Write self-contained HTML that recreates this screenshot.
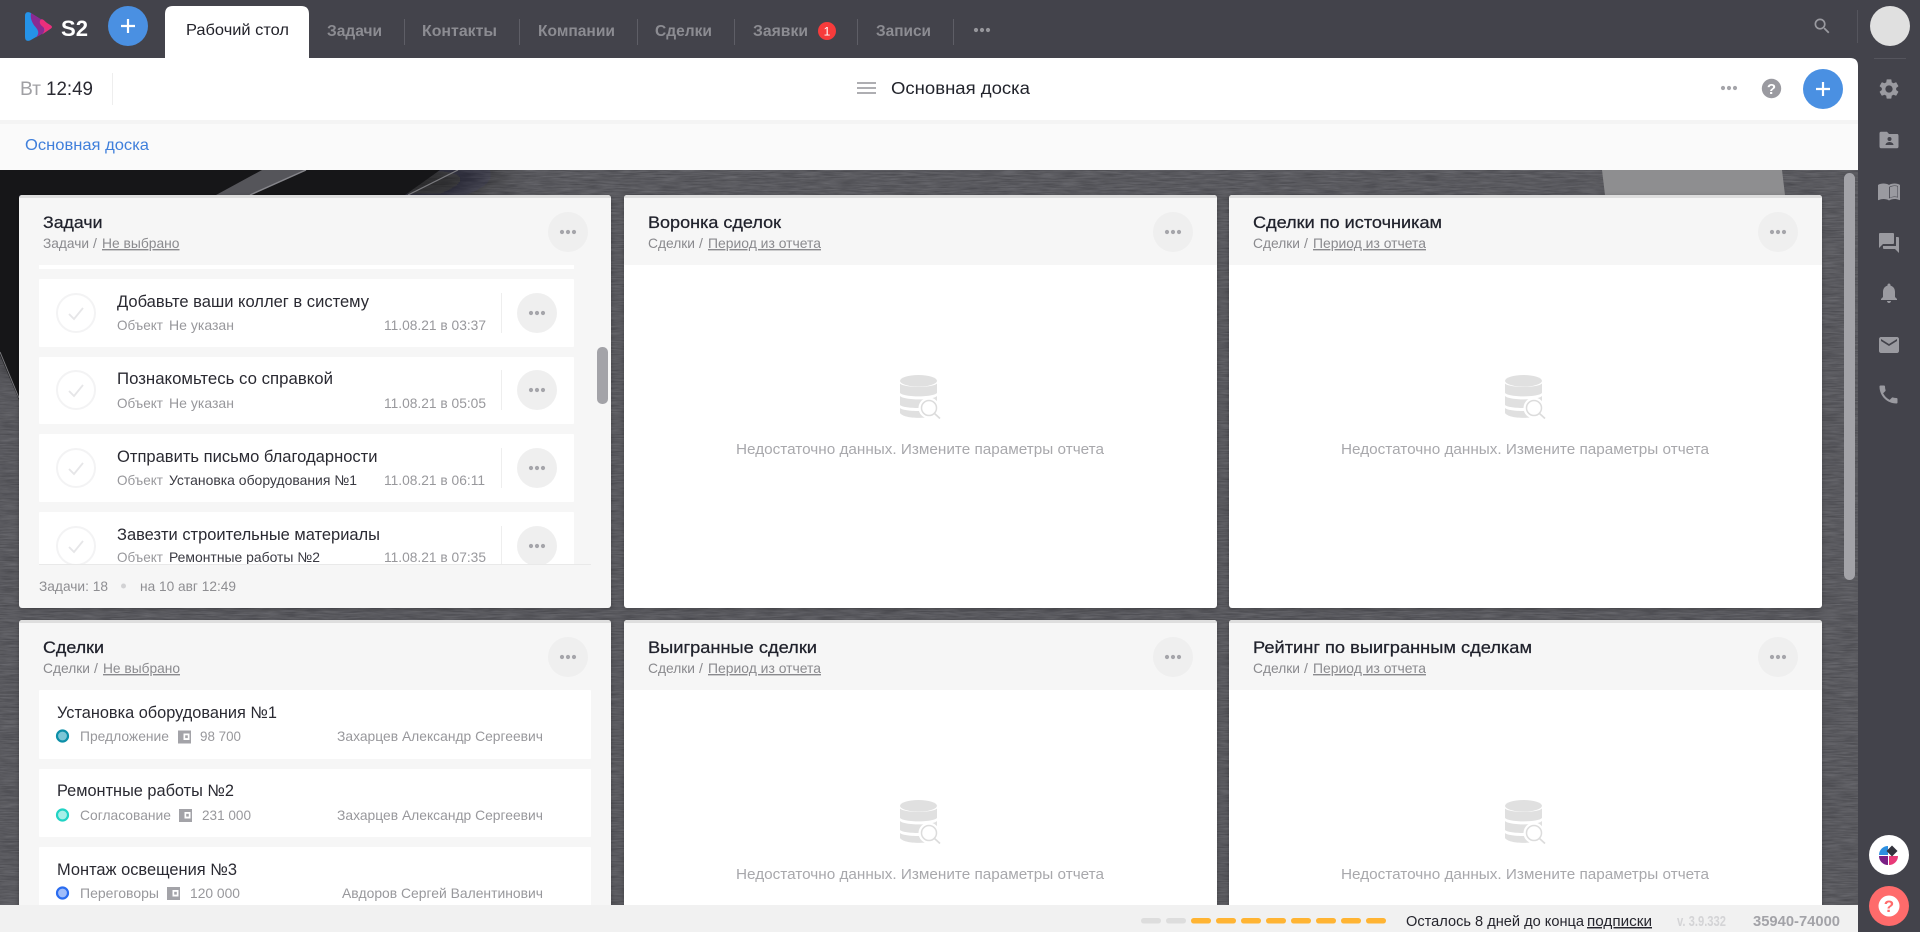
<!DOCTYPE html>
<html lang="ru">
<head>
<meta charset="utf-8">
<title>Рабочий стол</title>
<style>
html,body{margin:0;padding:0;width:1920px;height:932px;overflow:hidden;background:#43434b}
svg{display:block}
text{font-family:"Liberation Sans","Noto Sans CJK SC",sans-serif;white-space:pre}
.nav{font-size:15.5px;font-weight:700;fill:#8c8c92}
.tt{font-size:17px;fill:#20222c;stroke:#20222c;stroke-width:.25}
.sub{font-size:14px;fill:#8a8a8e}
.u{text-decoration:underline}
.it{font-size:16.5px;fill:#2a2a32}
.m{font-size:14px;fill:#98989c}
.d{font-size:14px;fill:#3a3a42}
.e{font-size:15px;fill:#a8a8ac}
</style>
</head>
<body>
<svg xmlns="http://www.w3.org/2000/svg" width="1920" height="932" viewBox="0 0 1920 932">
<defs>
<filter id="tex" x="0" y="0" width="100%" height="100%" color-interpolation-filters="sRGB">
<feTurbulence type="fractalNoise" baseFrequency="0.05 0.7" numOctaves="3" seed="4"/>
<feColorMatrix type="matrix" values="0.17 0 0 0 0.265  0.17 0 0 0 0.265  0.17 0 0 0 0.285  0 0 0 0 1"/>
</filter>
<filter id="sh" x="-5%" y="-5%" width="110%" height="110%"><feDropShadow dx="0" dy="1" stdDeviation="2" flood-color="#000" flood-opacity=".25"/></filter>
<filter id="bl"><feGaussianBlur stdDeviation="14"/></filter>
<clipPath id="main"><rect x="0" y="170" width="1858" height="735"/></clipPath>
<clipPath id="list"><rect x="39" y="265" width="552" height="299"/></clipPath>
<symbol id="dots" viewBox="0 0 40 40" overflow="visible">
<circle cx="14" cy="20" r="2.1" fill="#a5a5aa"/><circle cx="20" cy="20" r="2.1" fill="#a5a5aa"/><circle cx="26" cy="20" r="2.1" fill="#a5a5aa"/>
</symbol>
<symbol id="more" viewBox="0 0 40 40">
<circle cx="20" cy="20" r="20" fill="#efefef"/>
<circle cx="14" cy="20" r="2.1" fill="#a5a5aa"/><circle cx="20" cy="20" r="2.1" fill="#a5a5aa"/><circle cx="26" cy="20" r="2.1" fill="#a5a5aa"/>
</symbol>
<symbol id="chk" viewBox="0 0 40 40">
<circle cx="20" cy="20" r="19" fill="#fff" stroke="#f3f3f4" stroke-width="2"/>
<path d="M13 21l5 5 9-11" fill="none" stroke="#e6e6e8" stroke-width="1.8"/>
</symbol>
<symbol id="db" viewBox="0 0 41 44">
<ellipse cx="18.5" cy="5.8" rx="18.5" ry="5.8" fill="#e0e0e0"/>
<path d="M0 8.5C4 13 33 13 37 8.5V18C33 22.5 4 22.5 0 18Z" fill="#e0e0e0"/>
<path d="M0 21C4 25.5 33 25.5 37 21V30C33 34 4 34 0 30Z" fill="#e0e0e0"/>
<path d="M0 33C4 37 33 37 37 33V38C33 44.500 4 44.500 0 38Z" fill="#e0e0e0"/>
<circle cx="29" cy="33" r="10.500" fill="#fff"/>
<circle cx="29" cy="33" r="7.500" fill="#fff" stroke="#dcdcdc" stroke-width="1.500"/>
<path d="M34.500 38.500L40 43.500" stroke="#dcdcdc" stroke-width="1.700"/>
</symbol>
<symbol id="wal" viewBox="0 0 13 13">
<rect width="13" height="13" fill="#a3a3a8"/>
<rect x="5.500" y="3" width="6" height="6.500" fill="#fff"/>
<rect x="7.200" y="4.800" width="2.600" height="2.800" fill="#a3a3a8"/>
</symbol>
</defs>

<!-- background -->
<g clip-path="url(#main)">
<rect x="0" y="170" width="1858" height="735" fill="#5a5a60" filter="url(#tex)"/>
<path d="M0 170H520L440 195H20V380L0 340Z" fill="#101012" filter="url(#bl)"/>
<path d="M0 170H440L405 195H19V400L0 355Z" fill="#161618"/>
<path d="M0 352L19 398" stroke="#77777b" stroke-width="1" fill="none"/>
<path d="M216 195L262 170H306L250 195Z" fill="#55555a"/>
<path d="M250 195L306 170" stroke="#85858a" stroke-width="1.500"/>
<path d="M408 195L458 170" stroke="#7c7c80" stroke-width="1.200"/>
<path d="M1602 170H1782L1785 195H1605Z" fill="#8e8e90"/>
</g>

<!-- top bar -->
<rect x="0" y="0" width="1920" height="58" fill="#43434b"/>
<g>
<path d="M25 16Q25 11 30 12.500L50 25Q53 27 50 29L30 40.500Q25 42 25 37Z" fill="#2593e8"/>
<path d="M31 13L43 20.500L44.500 32.500L36 37.500C40 33 38 30 35.500 27C32 23 30 18 31 13Z" fill="#8a2a92"/>
<path d="M41 19.500C43 18.500 45 21.500 47 23L51 25.500Q53 27 51 28.500L42 34.500C45 31 45.500 28.500 42 26C39.500 24 39 21 41 19.500Z" fill="#ea2f7c"/>
</g>
<text x="61" y="36" textLength="27" lengthAdjust="spacingAndGlyphs" style="font-size:22px;font-weight:700;fill:#fff">S2</text>
<circle cx="128" cy="26" r="20" fill="#4a90e2"/>
<path d="M121 26h14M128 19v14" stroke="#fff" stroke-width="2.200"/>
<path d="M165 58V14Q165 6 173 6H301Q309 6 309 14V58Z" fill="#fff"/>
<text x="186" y="35" textLength="103" lengthAdjust="spacingAndGlyphs" style="font-size:16px;fill:#22222a">Рабочий стол</text>
<text class="nav" x="327" y="36" textLength="55" lengthAdjust="spacingAndGlyphs">Задачи</text>
<text class="nav" x="422" y="36" textLength="75" lengthAdjust="spacingAndGlyphs">Контакты</text>
<text class="nav" x="538" y="36" textLength="77" lengthAdjust="spacingAndGlyphs">Компании</text>
<text class="nav" x="655" y="36" textLength="57" lengthAdjust="spacingAndGlyphs">Сделки</text>
<text class="nav" x="753" y="36" textLength="55" lengthAdjust="spacingAndGlyphs">Заявки</text>
<text class="nav" x="876" y="36" textLength="55" lengthAdjust="spacingAndGlyphs">Записи</text>
<path d="M404.500 19v26M519.500 19v26M637.500 19v26M734.500 19v26M857.500 19v26M953.500 19v26" stroke="#5e5e66" stroke-width="1"/>
<circle cx="827" cy="31" r="9" fill="#f73b3b"/>
<text x="827" y="35.500" text-anchor="middle" style="font-size:12px;fill:#fff">1</text>
<use href="#dots" x="962" y="10" width="40" height="40" opacity=".85"/>
<g transform="translate(1812,16) scale(.85)" fill="#9a9aa0"><path d="M15.500 14h-.79l-.28-.27C15.410 12.590 16 11.110 16 9.500 16 5.910 13.090 3 9.500 3S3 5.910 3 9.500 5.910 16 9.500 16c1.610 0 3.090-.59 4.230-1.570l.27.28v.79l5 4.990L20.490 19l-4.990-5zm-6 0C7.010 14 5 11.990 5 9.500S7.010 5 9.500 5 14 7.010 14 9.500 11.990 14 9.500 14z"/></g>
<path d="M1857.500 10v33" stroke="#55555d"/>
<circle cx="1890" cy="26" r="20" fill="#e0e0e0"/>

<!-- right sidebar -->
<rect x="1858" y="46" width="62" height="886" fill="#43434b"/>
<path d="M1874 58.500h32" stroke="#55555d"/>
<g fill="#9a9aa0">
<g transform="translate(1877,77)"><path d="M19.140 12.940c.04-.3.06-.61.06-.94 0-.32-.02-.64-.07-.94l2.030-1.580c.18-.14.23-.41.12-.61l-1.920-3.320c-.12-.22-.37-.29-.59-.22l-2.390.96c-.5-.38-1.030-.7-1.620-.94l-.36-2.540c-.04-.24-.24-.41-.48-.41h-3.840c-.24 0-.43.17-.47.41l-.36 2.540c-.59.24-1.130.57-1.620.94l-2.390-.96c-.22-.08-.47 0-.59.22L2.740 8.870c-.12.21-.08.47.12.61l2.030 1.580c-.05.3-.09.63-.09.94s.02.64.07.94l-2.030 1.580c-.18.14-.23.41-.12.61l1.920 3.320c.12.22.37.29.59.22l2.390-.96c.5.38 1.030.7 1.620.94l.36 2.540c.05.24.24.41.48.41h3.840c.24 0 .44-.17.47-.41l.36-2.540c.59-.24 1.130-.56 1.620-.94l2.390.96c.22.08.47 0 .59-.22l1.920-3.320c.12-.22.07-.47-.12-.61l-2.010-1.580zM12 15.600c-1.980 0-3.600-1.620-3.600-3.600s1.620-3.600 3.600-3.600 3.600 1.620 3.600 3.600-1.620 3.600-3.600 3.600z"/></g>
<g transform="translate(1877,128)"><path d="M20.500 6H12l-2-2.200H4C3 3.800 2.500 4.500 2.500 5.500v13c0 1 .6 1.700 1.500 1.700h16c1 0 1.500-.7 1.500-1.700V8c0-1-.4-2-1-2z"/><circle cx="12.500" cy="11" r="2" fill="#43434b"/><path d="M8.500 17c0-2 2.500-3 4-3s4 1 4 3z" fill="#43434b"/></g>
<g transform="translate(1877,179)"><path d="M21 5c-1.110-.35-2.330-.5-3.500-.5-1.950 0-4.050.4-5.500 1.500-1.450-1.100-3.550-1.500-5.500-1.500S2.450 4.900 1 6v14.650c0 .25.25.5.5.5.1 0 .15-.05.25-.05C3.100 20.450 5.050 20 6.500 20c1.950 0 4.050.4 5.500 1.500 1.350-.85 3.800-1.500 5.500-1.500 1.650 0 3.350.3 4.750 1.050.1.05.15.05.25.05.25 0 .5-.25.5-.5V6c-.6-.45-1.250-.75-2-1zm0 13.500c-1.100-.35-2.300-.5-3.500-.5-1.700 0-4.150.65-5.500 1.500V8c1.350-.85 3.800-1.500 5.500-1.500 1.200 0 2.400.15 3.500.5v11.500z"/><path d="M12.800 8.300c1.300-.8 3.300-1.300 4.700-1.300 1 0 2 .1 3 .4v10.500c-1-.3-2-.4-3-.4-1.500 0-3.400.5-4.700 1.200zM11.200 8.300C9.900 7.500 8 7 6.500 7c-1 0-2 .1-3 .4v10.500c1-.3 2-.4 3-.4 1.500 0 3.400.5 4.700 1.200z"/></g>
<g transform="translate(1877,231)"><path d="M21 6h-2v9H6v2c0 .55.45 1 1 1h11l4 4V7c0-.55-.45-1-1-1zm-4 6V3c0-.55-.45-1-1-1H3c-.55 0-1 .45-1 1v14l4-4h10c.55 0 1-.45 1-1z"/></g>
<g transform="translate(1877,281)"><path d="M12 22c1.100 0 2-.9 2-2h-4c0 1.100.89 2 2 2zm6-6v-5c0-3.070-1.640-5.640-4.500-6.320V4c0-.83-.67-1.500-1.500-1.500s-1.500.67-1.500 1.500v.68C7.630 5.360 6 7.920 6 11v5l-2 2v1h16v-1l-2-2z"/></g>
<g transform="translate(1877,333)"><path d="M20 4H4c-1.100 0-1.990.9-1.990 2L2 18c0 1.100.9 2 2 2h16c1.100 0 2-.9 2-2V6c0-1.100-.9-2-2-2zm0 4l-8 5-8-5V6l8 5 8-5v2z"/></g>
<g transform="translate(1877,383)"><path d="M6.620 10.790c1.440 2.830 3.760 5.140 6.590 6.590l2.200-2.200c.27-.27.67-.36 1.020-.24 1.120.37 2.330.57 3.570.57.55 0 1 .45 1 1V20c0 .55-.45 1-1 1-9.390 0-17-7.610-17-17 0-.55.45-1 1-1h3.500c.55 0 1 .45 1 1 0 1.250.2 2.450.57 3.570.11.35.03.74-.25 1.020l-2.200 2.200z" transform="translate(-.5,-.5)"/></g>
</g>
<circle cx="1889" cy="855" r="20" fill="#fff"/>
<path d="M1888 855v-9a9 9 0 0 0-9 9z" fill="#2d8fe0"/>
<path d="M1888 856v9a9 9 0 0 1-9-9z" fill="#7a1f85"/>
<path d="M1889 856v9a9 9 0 0 0 9-9z" fill="#e83a78"/>
<path d="M1892 845.500l5.500 5.500-5.500 5.500-5.500-5.500z" fill="#33333d"/>
<circle cx="1889" cy="906" r="20" fill="#ff6b6b"/>
<circle cx="1889" cy="906" r="10.500" fill="#fff"/>
<text x="1889" y="912" text-anchor="middle" style="font-size:17px;font-weight:700;fill:#ff6b6b">?</text>

<!-- board header -->
<path d="M0 58H1850Q1858 58 1858 66V120H0Z" fill="#fff"/>
<rect x="0" y="120" width="1858" height="50" fill="#fafafa"/>
<rect x="0" y="120" width="1858" height="4" fill="#f4f4f4"/>
<text x="20" y="95" textLength="21" lengthAdjust="spacingAndGlyphs" style="font-size:19px;fill:#a0a0a4">Вт</text>
<text x="46" y="95" textLength="47" lengthAdjust="spacingAndGlyphs" style="font-size:19px;fill:#2a2a32">12:49</text>
<path d="M112.500 73v32" stroke="#eeeeee"/>
<path d="M857 83h19M857 88h19M857 93h19" stroke="#a3a3a8" stroke-width="1.800"/>
<text x="891" y="94" textLength="139" lengthAdjust="spacingAndGlyphs" style="font-size:17.500px;fill:#22242c">Основная доска</text>
<use href="#dots" x="1709" y="68" width="40" height="40"/>
<circle cx="1771.500" cy="88.500" r="9.700" fill="#9a9aa0"/>
<text x="1771.500" y="94" text-anchor="middle" style="font-size:15px;font-weight:700;fill:#fff">?</text>
<circle cx="1823" cy="89" r="20" fill="#4a90e2"/>
<path d="M1816 89h14M1823 82v14" stroke="#fff" stroke-width="2.200"/>
<text x="25" y="150" textLength="124" lengthAdjust="spacingAndGlyphs" style="font-size:16px;fill:#3f7fdb">Основная доска</text>

<!-- scrollbar -->
<rect x="1844" y="173" width="11" height="407" rx="5.500" fill="#a3a3a8"/>

<g clip-path="url(#main)">
<!-- card: tasks -->
<g filter="url(#sh)"><rect x="19" y="195" width="592" height="413" rx="3" fill="#f6f6f6"/></g>
<path d="M19 198a3 3 0 0 1 3-3H608a3 3 0 0 1 3 3z" fill="#dedede"/>
<text class="tt" x="43" y="228" textLength="59.500" lengthAdjust="spacingAndGlyphs">Задачи</text>
<text class="sub" x="43" y="248" textLength="46" lengthAdjust="spacingAndGlyphs">Задачи</text>
<text class="sub" x="93" y="248">/</text>
<text class="sub u" x="102" y="248" textLength="77.500" lengthAdjust="spacingAndGlyphs">Не выбрано</text>
<use href="#more" x="548" y="212" width="40" height="40"/>
<g clip-path="url(#list)">
<rect x="39" y="255" width="535" height="14" fill="#fff"/>
<rect x="39" y="279" width="535" height="68" rx="1" fill="#fff"/>
<rect x="39" y="357" width="535" height="67" rx="1" fill="#fff"/>
<rect x="39" y="434" width="535" height="68" rx="1" fill="#fff"/>
<rect x="39" y="512" width="535" height="68" rx="1" fill="#fff"/>
<use href="#chk" x="56" y="293" width="40" height="40"/>
<use href="#chk" x="56" y="370" width="40" height="40"/>
<use href="#chk" x="56" y="448" width="40" height="40"/>
<use href="#chk" x="56" y="526" width="40" height="40"/>
<text class="it" x="117" y="307" textLength="252" lengthAdjust="spacingAndGlyphs">Добавьте ваши коллег в систему</text>
<text class="m" x="117" y="330" textLength="46" lengthAdjust="spacingAndGlyphs">Объект</text>
<text class="m" x="169" y="330" textLength="65" lengthAdjust="spacingAndGlyphs">Не указан</text>
<text class="m" x="384" y="330" textLength="102" lengthAdjust="spacingAndGlyphs">11.08.21 в 03:37</text>
<text class="it" x="117" y="384" textLength="216" lengthAdjust="spacingAndGlyphs">Познакомьтесь со справкой</text>
<text class="m" x="117" y="408" textLength="46" lengthAdjust="spacingAndGlyphs">Объект</text>
<text class="m" x="169" y="408" textLength="65" lengthAdjust="spacingAndGlyphs">Не указан</text>
<text class="m" x="384" y="408" textLength="102" lengthAdjust="spacingAndGlyphs">11.08.21 в 05:05</text>
<text class="it" x="117" y="462" textLength="260.500" lengthAdjust="spacingAndGlyphs">Отправить письмо благодарности</text>
<text class="m" x="117" y="485" textLength="46" lengthAdjust="spacingAndGlyphs">Объект</text>
<text class="d" x="169" y="485" textLength="188" lengthAdjust="spacingAndGlyphs">Установка оборудования №1</text>
<text class="m" x="384" y="485" textLength="101" lengthAdjust="spacingAndGlyphs">11.08.21 в 06:11</text>
<text class="it" x="117" y="540" textLength="263" lengthAdjust="spacingAndGlyphs">Завезти строительные материалы</text>
<text class="m" x="117" y="562" textLength="46" lengthAdjust="spacingAndGlyphs">Объект</text>
<text class="d" x="169" y="562" textLength="151" lengthAdjust="spacingAndGlyphs">Ремонтные работы №2</text>
<text class="m" x="384" y="562" textLength="102" lengthAdjust="spacingAndGlyphs">11.08.21 в 07:35</text>
<path d="M501.500 293v40M501.500 370v40M501.500 448v40M501.500 526v40" stroke="#eeeeee"/>
<use href="#more" x="517" y="293" width="40" height="40"/>
<use href="#more" x="517" y="370" width="40" height="40"/>
<use href="#more" x="517" y="448" width="40" height="40"/>
<use href="#more" x="517" y="526" width="40" height="40"/>
</g>
<path d="M39 564.500H591" stroke="#e9e9e9"/>
<rect x="597" y="347" width="11" height="57" rx="5" fill="#a3a3a8"/>
<text class="m" x="39" y="591" textLength="69" lengthAdjust="spacingAndGlyphs" style="fill:#8e8e92">Задачи: 18</text>
<circle cx="123.500" cy="586" r="2.500" fill="#d2d2d4"/>
<text class="m" x="140" y="591" textLength="96" lengthAdjust="spacingAndGlyphs" style="fill:#8e8e92">на 10 авг 12:49</text>

<!-- card: funnel -->
<g filter="url(#sh)"><rect x="624" y="195" width="593" height="413" rx="3" fill="#fff"/></g>
<path d="M624 265V198a3 3 0 0 1 3-3H1214a3 3 0 0 1 3 3V265Z" fill="#f6f6f6"/>
<path d="M624 198a3 3 0 0 1 3-3H1214a3 3 0 0 1 3 3z" fill="#dedede"/>
<text class="tt" x="648" y="228" textLength="133" lengthAdjust="spacingAndGlyphs">Воронка сделок</text>
<text class="sub" x="648" y="248" textLength="47" lengthAdjust="spacingAndGlyphs">Сделки</text>
<text class="sub" x="699" y="248">/</text>
<text class="sub u" x="708" y="248" textLength="113" lengthAdjust="spacingAndGlyphs">Период из отчета</text>
<use href="#more" x="1153" y="212" width="40" height="40"/>
<use href="#db" x="900" y="375" width="41" height="44"/>
<text class="e" x="736" y="454" textLength="368" lengthAdjust="spacingAndGlyphs">Недостаточно данных. Измените параметры отчета</text>

<!-- card: sources -->
<g filter="url(#sh)"><rect x="1229" y="195" width="593" height="413" rx="3" fill="#fff"/></g>
<path d="M1229 265V198a3 3 0 0 1 3-3H1819a3 3 0 0 1 3 3V265Z" fill="#f6f6f6"/>
<path d="M1229 198a3 3 0 0 1 3-3H1819a3 3 0 0 1 3 3z" fill="#dedede"/>
<text class="tt" x="1253" y="228" textLength="189" lengthAdjust="spacingAndGlyphs">Сделки по источникам</text>
<text class="sub" x="1253" y="248" textLength="47" lengthAdjust="spacingAndGlyphs">Сделки</text>
<text class="sub" x="1304" y="248">/</text>
<text class="sub u" x="1313" y="248" textLength="113" lengthAdjust="spacingAndGlyphs">Период из отчета</text>
<use href="#more" x="1758" y="212" width="40" height="40"/>
<use href="#db" x="1505" y="375" width="41" height="44"/>
<text class="e" x="1341" y="454" textLength="368" lengthAdjust="spacingAndGlyphs">Недостаточно данных. Измените параметры отчета</text>

<!-- card: deals -->
<g filter="url(#sh)"><rect x="19" y="620" width="592" height="320" rx="3" fill="#f6f6f6"/></g>
<path d="M19 623a3 3 0 0 1 3-3H608a3 3 0 0 1 3 3z" fill="#dedede"/>
<text class="tt" x="43" y="653" textLength="61" lengthAdjust="spacingAndGlyphs">Сделки</text>
<text class="sub" x="43" y="673" textLength="47" lengthAdjust="spacingAndGlyphs">Сделки</text>
<text class="sub" x="94" y="673">/</text>
<text class="sub u" x="103" y="673" textLength="77" lengthAdjust="spacingAndGlyphs">Не выбрано</text>
<use href="#more" x="548" y="637" width="40" height="40"/>
<rect x="39" y="690" width="552" height="69" rx="1" fill="#fff"/>
<rect x="39" y="769" width="552" height="68" rx="1" fill="#fff"/>
<rect x="39" y="847" width="552" height="70" rx="1" fill="#fff"/>
<text class="it" x="57" y="718" textLength="220" lengthAdjust="spacingAndGlyphs">Установка оборудования №1</text>
<circle cx="62.500" cy="736" r="5.500" fill="#7cc6d6" stroke="#0c8fa8" stroke-width="2.200"/>
<text class="m" x="80" y="741" textLength="89" lengthAdjust="spacingAndGlyphs">Предложение</text>
<use href="#wal" x="178" y="730.500" width="13" height="13"/>
<text class="m" x="200" y="741" textLength="41" lengthAdjust="spacingAndGlyphs">98 700</text>
<text class="m" x="337" y="741" textLength="206" lengthAdjust="spacingAndGlyphs">Захарцев Александр Сергеевич</text>
<text class="it" x="57" y="796" textLength="177" lengthAdjust="spacingAndGlyphs">Ремонтные работы №2</text>
<circle cx="62.500" cy="815" r="5.500" fill="#a8efe8" stroke="#20d3c4" stroke-width="2.200"/>
<text class="m" x="80" y="820" textLength="91" lengthAdjust="spacingAndGlyphs">Согласование</text>
<use href="#wal" x="179" y="809" width="13" height="13"/>
<text class="m" x="202" y="820" textLength="49" lengthAdjust="spacingAndGlyphs">231 000</text>
<text class="m" x="337" y="820" textLength="206" lengthAdjust="spacingAndGlyphs">Захарцев Александр Сергеевич</text>
<text class="it" x="57" y="875" textLength="180" lengthAdjust="spacingAndGlyphs">Монтаж освещения №3</text>
<circle cx="62.500" cy="893" r="5.500" fill="#a0bdfa" stroke="#2a6cf0" stroke-width="2.200"/>
<text class="m" x="80" y="898" textLength="79" lengthAdjust="spacingAndGlyphs">Переговоры</text>
<use href="#wal" x="167" y="887" width="13" height="13"/>
<text class="m" x="190" y="898" textLength="50" lengthAdjust="spacingAndGlyphs">120 000</text>
<text class="m" x="342" y="898" textLength="201" lengthAdjust="spacingAndGlyphs">Авдоров Сергей Валентинович</text>

<!-- card: won -->
<g filter="url(#sh)"><rect x="624" y="620" width="593" height="320" rx="3" fill="#fff"/></g>
<path d="M624 690V623a3 3 0 0 1 3-3H1214a3 3 0 0 1 3 3V690Z" fill="#f6f6f6"/>
<path d="M624 623a3 3 0 0 1 3-3H1214a3 3 0 0 1 3 3z" fill="#dedede"/>
<text class="tt" x="648" y="653" textLength="169" lengthAdjust="spacingAndGlyphs">Выигранные сделки</text>
<text class="sub" x="648" y="673" textLength="47" lengthAdjust="spacingAndGlyphs">Сделки</text>
<text class="sub" x="699" y="673">/</text>
<text class="sub u" x="708" y="673" textLength="113" lengthAdjust="spacingAndGlyphs">Период из отчета</text>
<use href="#more" x="1153" y="637" width="40" height="40"/>
<use href="#db" x="900" y="800" width="41" height="44"/>
<text class="e" x="736" y="879" textLength="368" lengthAdjust="spacingAndGlyphs">Недостаточно данных. Измените параметры отчета</text>

<!-- card: rating -->
<g filter="url(#sh)"><rect x="1229" y="620" width="593" height="320" rx="3" fill="#fff"/></g>
<path d="M1229 690V623a3 3 0 0 1 3-3H1819a3 3 0 0 1 3 3V690Z" fill="#f6f6f6"/>
<path d="M1229 623a3 3 0 0 1 3-3H1819a3 3 0 0 1 3 3z" fill="#dedede"/>
<text class="tt" x="1253" y="653" textLength="279" lengthAdjust="spacingAndGlyphs">Рейтинг по выигранным сделкам</text>
<text class="sub" x="1253" y="673" textLength="47" lengthAdjust="spacingAndGlyphs">Сделки</text>
<text class="sub" x="1304" y="673">/</text>
<text class="sub u" x="1313" y="673" textLength="113" lengthAdjust="spacingAndGlyphs">Период из отчета</text>
<use href="#more" x="1758" y="637" width="40" height="40"/>
<use href="#db" x="1505" y="800" width="41" height="44"/>
<text class="e" x="1341" y="879" textLength="368" lengthAdjust="spacingAndGlyphs">Недостаточно данных. Измените параметры отчета</text>
</g>

<!-- status bar -->
<rect x="0" y="905" width="1858" height="27" fill="#f1f1f1"/>
<g>
<rect x="1141" y="918" width="20" height="5.500" rx="2.700" fill="#dddddd"/>
<rect x="1166" y="918" width="20" height="5.500" rx="2.700" fill="#dddddd"/>
<rect x="1191" y="918" width="20" height="5.500" rx="2.700" fill="#ffb433"/>
<rect x="1216" y="918" width="20" height="5.500" rx="2.700" fill="#ffb433"/>
<rect x="1241" y="918" width="20" height="5.500" rx="2.700" fill="#ffb433"/>
<rect x="1266" y="918" width="20" height="5.500" rx="2.700" fill="#ffb433"/>
<rect x="1291" y="918" width="20" height="5.500" rx="2.700" fill="#ffb433"/>
<rect x="1316" y="918" width="20" height="5.500" rx="2.700" fill="#ffb433"/>
<rect x="1341" y="918" width="20" height="5.500" rx="2.700" fill="#ffb433"/>
<rect x="1366" y="918" width="20" height="5.500" rx="2.700" fill="#ffb433"/>
</g>
<text x="1406" y="926" textLength="178" lengthAdjust="spacingAndGlyphs" style="font-size:14.500px;fill:#26262e">Осталось 8 дней до конца</text>
<text class="u" x="1587" y="926" textLength="65" lengthAdjust="spacingAndGlyphs" style="font-size:14.500px;fill:#26262e">подписки</text>
<text x="1677" y="926" textLength="49" lengthAdjust="spacingAndGlyphs" style="font-size:15px;font-weight:700;fill:#d4d4d6">v. 3.9.332</text>
<text x="1753" y="926" textLength="87" lengthAdjust="spacingAndGlyphs" style="font-size:14.500px;font-weight:700;fill:#a3a3a8">35940-74000</text>
</svg>
</body>
</html>
